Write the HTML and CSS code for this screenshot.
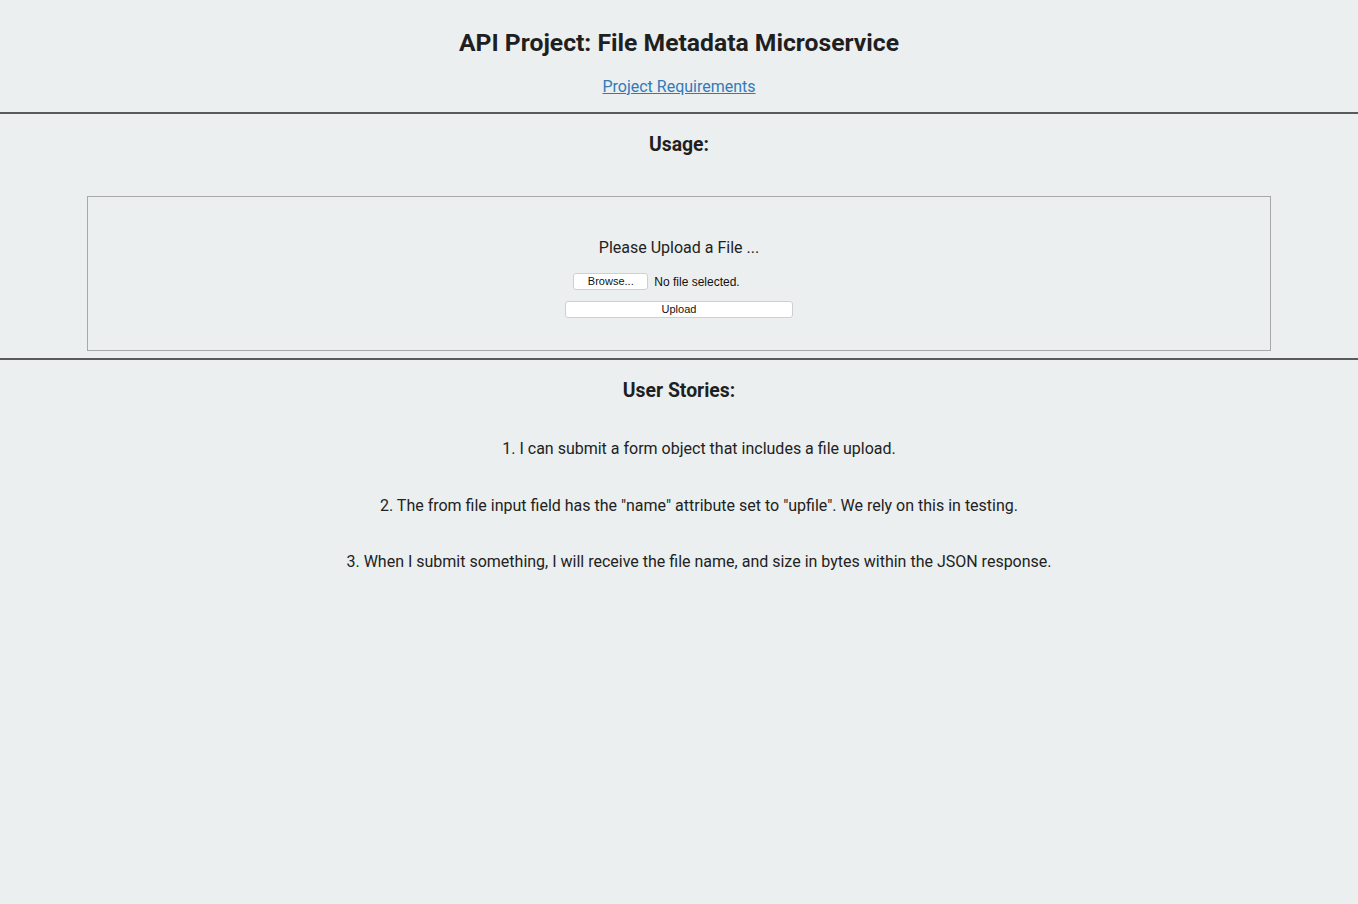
FILE: index.html
```html
<!DOCTYPE html>
<html>
<head>
<meta charset="utf-8">
<title>File Metadata Microservice</title>
<link rel="stylesheet" href="styles.css">
</head>
<body>
<header class="header">
  <h1 class="title">API Project: File Metadata Microservice</h1>
  <a class="req-link" href="#">Project Requirements</a>
</header>
<hr class="rule">
<section class="usage">
  <h3 class="section-title">Usage:</h3>
  <div class="upload-box">
    <p class="upload-label">Please Upload a File ...</p>
    <div class="file-row">
      <button class="browse-btn" type="button">Browse...</button>
      <span class="file-status">No file selected.</span>
    </div>
    <button class="upload-btn" type="button">Upload</button>
  </div>
</section>
<hr class="rule">
<section class="stories">
  <h3 class="section-title">User Stories:</h3>
  <ol class="story-list">
    <li>1. I can submit a form object that includes a file upload.</li>
    <li>2. The from file input field has the "name" attribute set to "upfile". We rely on this in testing.</li>
    <li>3. When I submit something, I will receive the file name, and size in bytes within the JSON response.</li>
  </ol>
</section>
</body>
</html>
```
FILE: styles.css
```css
html, body {
  margin: 0;
  padding: 0;
}
body {
  background: #ebeff0;
  color: #222;
  font-family: Roboto, "Liberation Sans", sans-serif;
  text-align: center;
}
.header {
  padding-top: 29px;
  padding-bottom: 15px;
}
.title {
  margin: 0;
  font-size: 24.7px;
  font-weight: 700;
  line-height: 28px;
  color: #1f1f1f;
}
.req-link {
  display: inline-block;
  margin-top: 20px;
  font-size: 16px;
  line-height: 20px;
  color: #337ab7;
  text-decoration: underline;
}
.rule {
  margin: 0;
  border: 0;
  border-top: 2px solid #5a5a5a;
  height: 0;
}
.section-title {
  margin: 0;
  font-size: 19.4px;
  font-weight: 700;
  line-height: 24px;
  color: #1f1f1f;
}
.usage {
  padding-top: 19px;
  padding-bottom: 7px;
}
.upload-box {
  margin: 39px 87px 0;
  border: 1px solid #a8a8a8;
  padding: 41px 0 32px;
  display: flex;
  flex-direction: column;
  align-items: center;
}
.upload-label {
  margin: 0;
  font-size: 16px;
  line-height: 20px;
  color: #222;
}
.file-row {
  display: flex;
  align-items: center;
  gap: 6px;
  margin-top: 15px;
  margin-right: 45px;
}
.browse-btn {
  width: 75px;
  height: 17px;
  padding: 0;
  border: 1px solid #cfcfcf;
  border-radius: 3px;
  background: #fff;
  font-family: "Liberation Sans", Arial, sans-serif;
  font-size: 11px;
  color: #111;
  line-height: 15px;
}
.file-status {
  font-family: "Liberation Sans", Arial, sans-serif;
  font-size: 12px;
  color: #111;
}
.upload-btn {
  margin-top: 11px;
  width: 228px;
  height: 17px;
  padding: 0;
  border: 1px solid #cfcfcf;
  border-radius: 3px;
  background: #fff;
  font-family: "Liberation Sans", Arial, sans-serif;
  font-size: 11px;
  color: #111;
  line-height: 15px;
}
.stories {
  padding-top: 19px;
}
.story-list {
  list-style: none;
  margin: 0;
  padding: 0 0 0 40px;
  margin-top: 36px;
}
.story-list li {
  font-size: 16px;
  line-height: 20px;
  color: #222;
  margin-bottom: 36.5px;
}
```
